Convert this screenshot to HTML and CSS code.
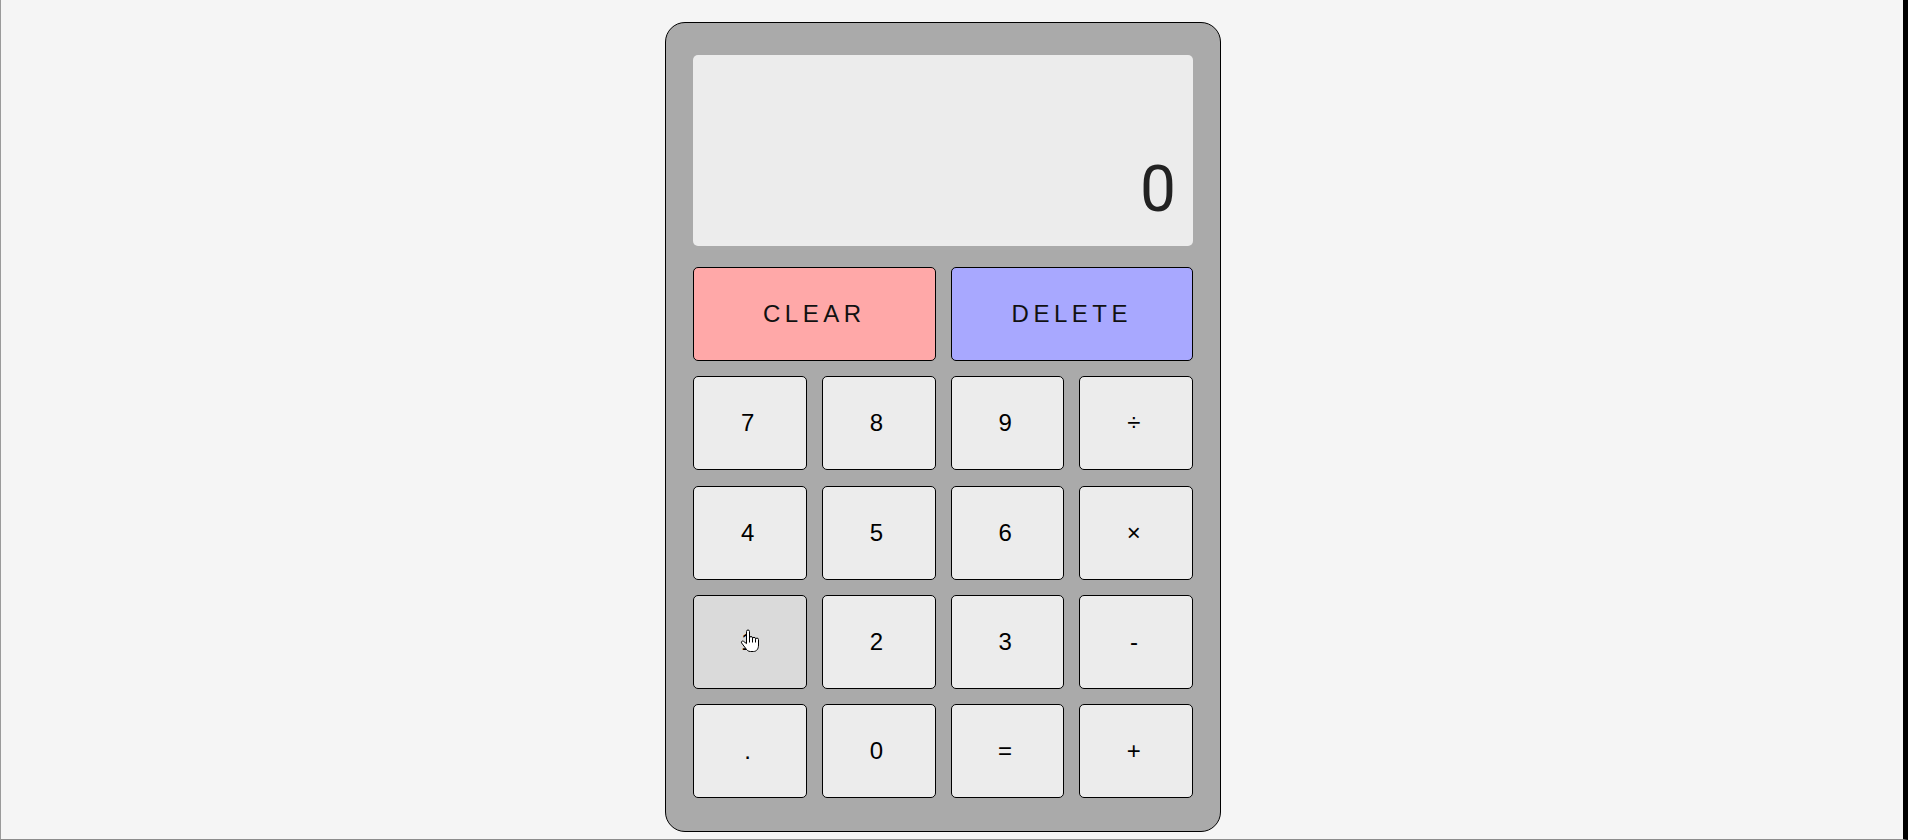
FILE: index.html
```html
<!DOCTYPE html>
<html lang="en">
<head>
<meta charset="utf-8">
<title>Calculator</title>
<link rel="stylesheet" href="styles.css">
</head>
<body>
  <main class="calculator">
    <div class="display">
      <div class="current">0</div>
    </div>
    <div class="keys">
      <button class="key key-wide key-clear">CLEAR</button>
      <button class="key key-wide key-delete">DELETE</button>
      <button class="key">7</button>
      <button class="key">8</button>
      <button class="key">9</button>
      <button class="key">÷</button>
      <button class="key">4</button>
      <button class="key">5</button>
      <button class="key">6</button>
      <button class="key">×</button>
      <button class="key key-hover">1
        <svg class="pointer" viewBox="0 0 20 24" width="20" height="24" aria-hidden="true">
          <path d="M6.5 2.5a1.5 1.5 0 0 1 3 0V9a1.5 1.5 0 0 1 3 0v0.8a1.5 1.5 0 0 1 3 0v0.8a1.5 1.5 0 0 1 3 0V16c0 4-2 6.5-5 6.5H10.5c-2.5 0-3.6-1.4-5-3.4L1.6 14c-0.8-1.1 0.6-2.6 1.9-1.7L6.5 14.6Z" fill="#fff" stroke="#000" stroke-width="1" stroke-linejoin="round"/>
          <path d="M9.5 9v4.5M12.5 9.8v3.7M15.5 10.6v2.9" fill="none" stroke="#000" stroke-width="1"/>
        </svg>
      </button>
      <button class="key">2</button>
      <button class="key">3</button>
      <button class="key">-</button>
      <button class="key">.</button>
      <button class="key">0</button>
      <button class="key">=</button>
      <button class="key">+</button>
    </div>
  </main>
</body>
</html>
```

FILE: styles.css
```css
* {
  box-sizing: border-box;
}

html {
  background: #f5f5f5;
}

body {
  margin: 0;
  height: 840px;
  overflow: hidden;
  display: flex;
  justify-content: center;
  align-items: flex-start;
  padding: 22px 18px 0 0;
  border-left: 1px solid #9a9a9a;
  border-bottom: 1px solid #8c8c8c;
  border-right: 5px solid #000;
  background: #f5f5f5;
}

.calculator {
  width: 556px;
  height: 810px;
  padding: 32px 27px 33px;
  background: #aaaaaa;
  border: 1px solid #000;
  border-radius: 20px;
  display: flex;
  flex-direction: column;
  gap: 21px;
}

.display {
  height: 192px;
  background: #ececec;
  border-radius: 5px;
  display: flex;
  flex-direction: column;
  justify-content: flex-end;
  align-items: flex-end;
  padding: 0 17px 24px;
}

.current {
  font-family: Roboto, "Noto Sans", sans-serif;
  font-size: 64px;
  line-height: 64px;
  color: #222;
}

.keys {
  display: grid;
  grid-template-columns: repeat(4, 1fr);
  grid-template-rows: repeat(5, 94px);
  row-gap: 15.25px;
  column-gap: 15px;
}

.key {
  position: relative;
  margin: 0;
  padding: 0;
  font-family: "Liberation Sans", Arial, sans-serif;
  font-size: 24px;
  letter-spacing: 4.5px;
  color: #000;
  background: #ececec;
  border: 1px solid #000;
  border-radius: 5px;
  cursor: pointer;
}

.key-wide {
  grid-column: span 2;
  color: #111;
}

.key-clear {
  background: #ffa8a8;
}

.key-delete {
  background: #a8a8ff;
}

.key-hover {
  background: #dadada;
}

.pointer {
  position: absolute;
  left: 46px;
  top: 33px;
}
```
